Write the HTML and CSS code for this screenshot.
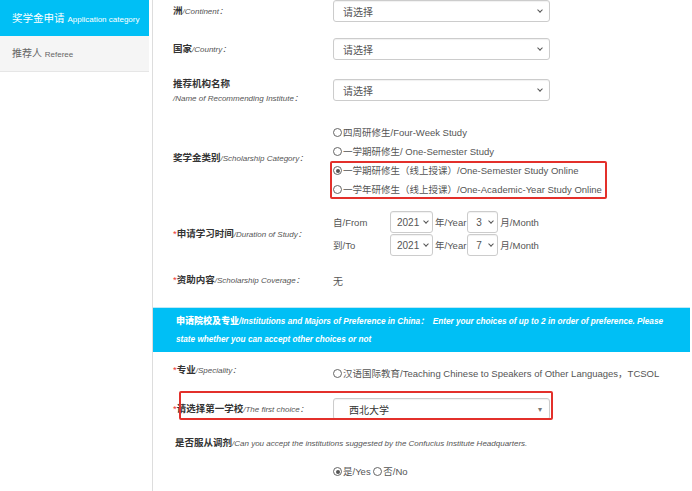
FILE: index.html
```
<!DOCTYPE html>
<html lang="zh-CN">
<head>
  <meta charset="UTF-8">
  <title>奖学金申请</title>
  <link rel="stylesheet" href="styles.css">
</head>
<body>

  <!-- Left menu -->
  <div class="sidebar">
    <a href="#" class="side-item active">奖学金申请 <small>Application category</small></a>
    <a href="#" class="side-item">推荐人 <small>Referee</small></a>
  </div>

  <!-- Form area -->
  <div class="main">

    <div class="row row-continent">
      <div class="label">洲<em>/Continent：</em></div>
      <div class="select wide"><span>请选择</span><i class="chev"></i></div>
    </div>

    <div class="row row-country">
      <div class="label">国家<em>/Country：</em></div>
      <div class="select wide"><span>请选择</span><i class="chev"></i></div>
    </div>

    <div class="row row-institute">
      <div class="label two-line">推荐机构名称<br><em>/Name of Recommending Institute：</em></div>
      <div class="select wide"><span>请选择</span><i class="chev"></i></div>
    </div>

    <div class="row row-category">
      <div class="label">奖学金类别<em>/Scholarship Category：</em></div>
      <div class="options">
        <div class="opt"><span class="radio"></span>四周研修生/Four-Week Study</div>
        <div class="opt"><span class="radio"></span>一学期研修生/ One-Semester Study</div>
        <div class="opt"><span class="radio checked"></span>一学期研修生（线上授课）/One-Semester Study Online</div>
        <div class="opt"><span class="radio"></span>一学年研修生（线上授课）/One-Academic-Year Study Online</div>
      </div>
    </div>

    <div class="row row-duration">
      <div class="label"><b class="req">*</b>申请学习时间<em>/Duration of Study：</em></div>
      <div class="dates">
        <div class="date-line">
          <span class="date-tag">自/From</span>
          <div class="select year"><span>2021</span><i class="chev"></i></div>
          <span class="unit">年/Year</span>
          <div class="select month"><span>3</span><i class="chev"></i></div>
          <span class="unit">月/Month</span>
        </div>
        <div class="date-line">
          <span class="date-tag">到/To</span>
          <div class="select year"><span>2021</span><i class="chev"></i></div>
          <span class="unit">年/Year</span>
          <div class="select month"><span>7</span><i class="chev"></i></div>
          <span class="unit">月/Month</span>
        </div>
      </div>
    </div>

    <div class="row row-coverage">
      <div class="label"><b class="req">*</b>资助内容<em>/Scholarship Coverage：</em></div>
      <div class="plain">无</div>
    </div>

    <div class="band">
      <b>申请院校及专业</b>/Institutions and Majors of Preference in China：&nbsp; Enter your choices of up to 2 in order of preference. Please state whether you can accept other choices or not
    </div>

    <div class="row row-speciality">
      <div class="label"><b class="req">*</b>专业<em>/Speciality：</em></div>
      <div class="opt speciality"><span class="radio"></span>汉语国际教育/Teaching Chinese to Speakers of Other Languages，TCSOL</div>
    </div>

    <div class="row row-choice">
      <div class="label"><b class="req">*</b>请选择第一学校<em>/The first choice：</em></div>
      <div class="select wide dark"><span>西北大学</span><i class="tri">▾</i></div>
    </div>

    <div class="row row-accept">
      <div class="label long">是否服从调剂<em>/Can you accept the institutions suggested by the Confucius Institute Headquarters.</em></div>
    </div>

    <div class="row row-yesno">
      <div class="opt"><span class="radio checked"></span>是/Yes&nbsp;<span class="radio"></span>否/No</div>
    </div>

    <!-- annotation boxes -->
    <div class="mark mark-category"></div>
    <div class="mark mark-choice"></div>
  </div>

</body>
</html>
```

FILE: styles.css
```
* {
  margin: 0;
  padding: 0;
  box-sizing: border-box;
}

body {
  font-family: "Liberation Sans", "Noto Sans CJK SC", sans-serif;
  font-size: 10px;
  color: #555;
  background: #fff;
  display: flex;
  height: 491px;
  overflow: hidden;
}

/* sidebar */
.sidebar {
  width: 153px;
  flex: none;
  border-right: 1px solid #ddd;
  padding-right: 3px;
}

.side-item {
  display: block;
  height: 36px;
  line-height: 36px;
  padding-left: 12px;
  font-size: 10px;
  color: #666;
  text-decoration: none;
  background: #f5f5f5;
  border-bottom: 1px solid #e6e6e6;
}

.side-item small {
  font-size: 8px;
}

.side-item.active {
  background: #00bff5;
  color: #fff;
  border-bottom: none;
  font-size: 10.5px;
}

/* main form */
.main {
  flex: 1;
  position: relative;
  margin-right: 2px;
}

.row {
  display: flex;
  align-items: center;
  padding-left: 20px;
}

.label {
  width: 160px;
  flex: none;
  font-weight: bold;
  color: #333;
  font-size: 9.5px;
  line-height: 14px;
}

.label em {
  font-weight: normal;
  font-size: 8px;
  color: #555;
}

.label.long {
  width: auto;
}

.req {
  color: #e33;
  font-weight: normal;
}

.select {
  height: 22px;
  border: 1px solid #ccc;
  border-radius: 3px;
  box-shadow: inset 0 1px 1px rgba(0,0,0,0.06);
  display: flex;
  align-items: center;
  justify-content: space-between;
  padding: 0 7px 0 9px;
  color: #555;
  font-size: 10px;
}

.select.wide {
  width: 217px;
}

.select.dark {
  color: #333;
  padding-left: 15px;
}

.chev {
  width: 4px;
  height: 4px;
  border-right: 1.3px solid #555;
  border-bottom: 1.3px solid #555;
  transform: rotate(45deg);
  margin-top: -3px;
}

.tri {
  font-style: normal;
  font-size: 8px;
  color: #777;
}

.row-continent { height: 22px; }
.row-country { margin-top: 16px; height: 22px; }
.row-institute { margin-top: 19px; height: 22px; }
.row-institute .label { margin-top: 2px; }

.row-category { margin-top: 22px; }
.row-category .label { margin-top: -5px; }

.opt {
  line-height: 19px;
  font-size: 9.5px;
  color: #555;
  white-space: nowrap;
  display: flex;
  align-items: center;
}

.radio {
  width: 9px;
  height: 9px;
  border: 1px solid #666;
  border-radius: 50%;
  display: inline-block;
  margin-right: 1px;
  position: relative;
}

.radio.checked::after {
  content: "";
  position: absolute;
  left: 1.5px;
  top: 1.5px;
  width: 4px;
  height: 4px;
  border-radius: 50%;
  background: #555;
}

.row-duration { margin-top: 12px; }

.dates {
  font-size: 9.5px;
}

.dates .date-line {
  display: flex;
  align-items: center;
  height: 22px;
  margin-bottom: 1px;
}

.date-tag {
  width: 57px;
}

.select.year {
  width: 43px;
  padding: 0 4px 0 6px;
}

.select.month {
  width: 31px;
  padding: 0 4px 0 8px;
}

.unit {
  padding: 0 1px 0 2px;
}

.row-coverage { margin-top: 13px; height: 20px; }

.plain {
  font-size: 10px;
}

.band {
  margin-top: 17px;
  background: #00bff5;
  color: #fff;
  font-style: italic;
  font-weight: bold;
  font-size: 8.2px;
  line-height: 18px;
  padding: 4px 22px 3px 23px;
  border-top: 1px solid #bfe9f7;
}

.band b {
  font-style: normal;
  font-size: 9px;
}

.row-speciality {
  margin-top: 8px;
  align-items: flex-start;
  height: 20px;
}

.row-speciality .label { line-height: 20px; }
.speciality { margin-top: 4px; }

.row-choice { margin-top: 18px; height: 22px; }

.row-accept { margin-top: 15px; padding-left: 22px; height: 16px; }

.row-yesno { margin-top: 11px; padding-left: 180px; }

/* red annotation frames */
.mark {
  position: absolute;
  border: 2px solid #e3302b;
  border-radius: 2px;
}

.mark-category {
  left: 177px;
  top: 161px;
  width: 277px;
  height: 38px;
}

.mark-choice {
  left: 26px;
  top: 391px;
  width: 374px;
  height: 29px;
}
```
